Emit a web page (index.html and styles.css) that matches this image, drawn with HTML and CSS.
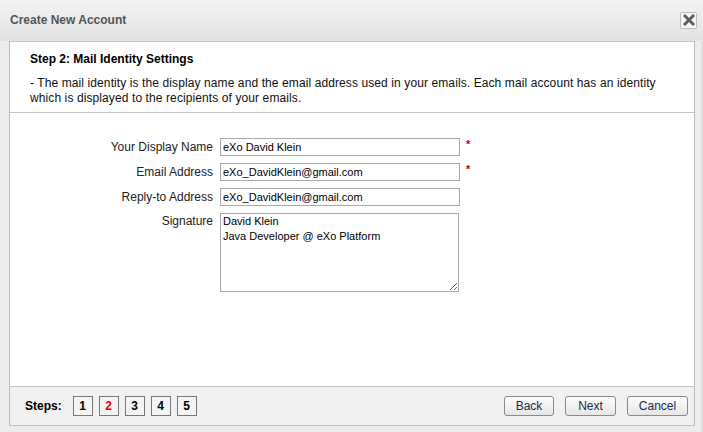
FILE: index.html
```html
<!DOCTYPE html>
<html>
<head>
<meta charset="utf-8">
<link rel="stylesheet" href="styles.css">
</head>
<body>
<div class="dialog">
  <div class="titlebar">
    <span class="title">Create New Account</span>
    <span class="close"><svg width="12" height="12" viewBox="0 0 12 12"><path d="M2 2 L10 10 M10 2 L2 10" stroke="#5e5e5e" stroke-width="3" stroke-linecap="square"/></svg></span>
  </div>
  <div class="frame">
    <div class="panel">
      <div class="intro">
        <div class="step-title">Step 2: Mail Identity Settings</div>
        <p class="desc">- The mail identity is the display name and the email address used in your emails. Each mail account has an identity which is displayed to the recipients of your emails.</p>
      </div>
      <div class="form">
        <div class="row"><label>Your Display Name</label><input type="text" value="eXo David Klein"><span class="req">*</span></div>
        <div class="row"><label>Email Address</label><input type="text" value="eXo_DavidKlein@gmail.com"><span class="req">*</span></div>
        <div class="row"><label>Reply-to Address</label><input type="text" value="eXo_DavidKlein@gmail.com"></div>
        <div class="row top"><label>Signature</label><textarea>David Klein
Java Developer @ eXo Platform</textarea></div>
      </div>
      <div class="footer">
        <div class="steps">
          <span class="steps-label">Steps:</span>
          <span class="step">1</span>
          <span class="step current">2</span>
          <span class="step">3</span>
          <span class="step">4</span>
          <span class="step">5</span>
        </div>
        <div class="buttons">
          <button class="btn back">Back</button>
          <button class="btn next">Next</button>
          <button class="btn cancel">Cancel</button>
        </div>
      </div>
    </div>
  </div>
</div>
</body>
</html>
```
FILE: styles.css
```css
html, body {
  margin: 0;
  padding: 0;
}
body {
  width: 703px;
  height: 432px;
  overflow: hidden;
  font-family: "Liberation Sans", Arial, sans-serif;
  font-size: 12px;
  color: #000;
  background: #e9e9e9;
}
.dialog {
  height: 432px;
  display: flex;
  flex-direction: column;
  background: #ececec;
  border-top-right-radius: 6px;
  box-shadow: inset -1px 0 0 #d4d4d4;
}
.titlebar {
  height: 41px;
  box-sizing: border-box;
  display: flex;
  align-items: center;
  justify-content: space-between;
  padding: 0 6px 0 10px;
  background: linear-gradient(#f3f3f3, #e2e2e2);
}
.title {
  font-weight: bold;
  color: #555;
  font-size: 12px;
  margin-top: -1px;
}
.close {
  width: 17px;
  height: 17px;
  box-sizing: border-box;
  border: 1px solid #bcbcbc;
  border-radius: 2px;
  background: #f6f6f6;
  display: flex;
  align-items: center;
  justify-content: center;
  margin-top: -1px;
}
.frame {
  flex: 1;
  padding: 0 8px 6px 9px;
  display: flex;
}
.panel {
  flex: 1;
  border: 1px solid #bdbdbd;
  border-top-color: #c4c4c4;
  background: #fff;
  display: flex;
  flex-direction: column;
}
.intro {
  padding: 10px 20px 0 20px;
  height: 71px;
  box-sizing: border-box;
  border-bottom: 1px solid #c4c4c4;
}
.step-title {
  font-weight: bold;
  font-size: 12px;
  line-height: 15px;
}
.desc {
  margin: 9px 0 0 0;
  line-height: 15px;
  color: #111;
  letter-spacing: 0.1px;
}
.form {
  flex: 1;
  padding-top: 25px;
}
.row {
  display: flex;
  align-items: center;
  margin-bottom: 7px;
}
.row.top {
  align-items: flex-start;
  margin-top: 1px;
}
.row label {
  width: 203px;
  text-align: right;
  padding-right: 7px;
  color: #222;
}
.row.top label {
  padding-top: 1px;
}
input[type="text"] {
  width: 240px;
  height: 18px;
  box-sizing: border-box;
  border: 1px solid #a9a9a9;
  padding: 0 2px;
  font-family: "Liberation Sans", Arial, sans-serif;
  font-size: 11px;
  color: #000;
  margin: 0;
}
textarea {
  width: 239px;
  height: 79px;
  box-sizing: border-box;
  border: 1px solid #a9a9a9;
  padding: 0 2px;
  font-family: "Liberation Sans", Arial, sans-serif;
  font-size: 11px;
  line-height: 15px;
  margin: 0;
  resize: both;
}
.req {
  color: #b00;
  font-size: 11px;
  font-weight: bold;
  margin-left: 6px;
  align-self: flex-start;
  margin-top: 0;
}
.footer {
  height: 39px;
  box-sizing: border-box;
  border-top: 1px solid #c4c4c4;
  background: #f1f1f1;
  display: flex;
  align-items: center;
  justify-content: space-between;
  padding: 0 6px 0 15px;
}
.steps {
  display: flex;
  align-items: center;
}
.steps-label {
  font-weight: bold;
  margin-right: 11px;
}
.step {
  width: 20px;
  height: 20px;
  box-sizing: border-box;
  border: 1px solid #777;
  background: #f4f4f4;
  display: flex;
  align-items: center;
  justify-content: center;
  font-weight: bold;
  margin-right: 6px;
}
.step.current {
  color: #e00;
}
.buttons {
  display: flex;
  gap: 11px;
}
.btn {
  height: 20px;
  box-sizing: border-box;
  border: 1px solid #8a8a8a;
  border-radius: 3px;
  background: linear-gradient(#fdfdfd, #e6e6e6);
  font-family: "Liberation Sans", Arial, sans-serif;
  font-size: 12px;
  color: #1a2a4a;
  padding: 0;
  margin: 0;
}
.back { width: 50px; }
.next { width: 51px; }
.cancel { width: 61px; }
```
